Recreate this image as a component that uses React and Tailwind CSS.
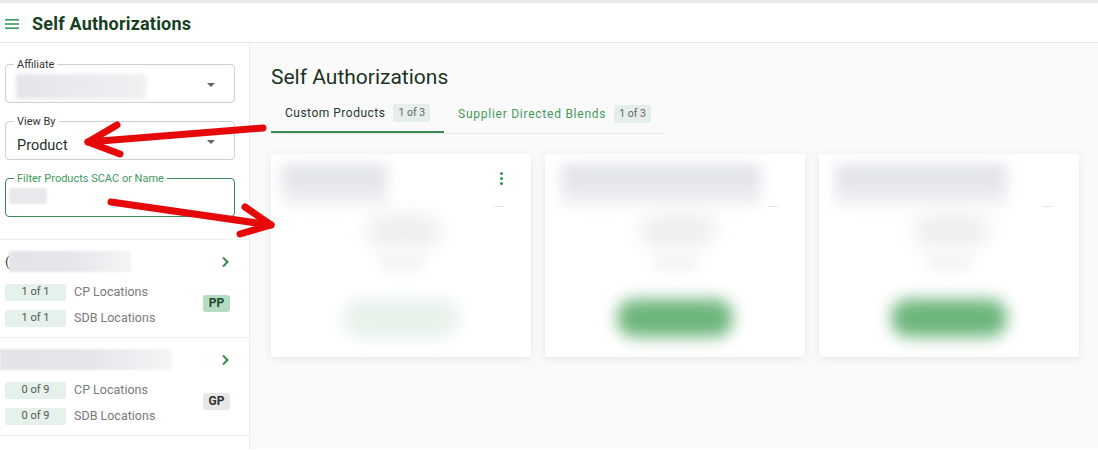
import React from "react";

const font = { fontFamily: "Roboto, 'Noto Sans', sans-serif" };

function Field({ label, active, children }) {
  return (
    <div
      className={`relative h-[39px] rounded-[4px] border ${
        active ? "border-[#3a8a55] border-[1.5px]" : "border-[#cfcfcf]"
      }`}
    >
      <span
        className={`absolute -top-[7px] left-[8px] bg-white px-[3px] text-[11px] leading-[13px] ${
          active ? "text-[#3f9a5c]" : "text-[#333]"
        }`}
      >
        {label}
      </span>
      {children}
    </div>
  );
}

function Caret() {
  return (
    <span className="absolute right-[19px] top-[18px] h-0 w-0 border-x-[4px] border-t-[4px] border-x-transparent border-t-[#666]" />
  );
}

function Chevron() {
  return (
    <svg width="10" height="12" viewBox="0 0 10 12" className="text-[#2f8a4c]">
      <path d="M3 1.5 L7.5 6 L3 10.5" fill="none" stroke="currentColor" strokeWidth="2" />
    </svg>
  );
}

function Item({ nameWidth, prefix, a, b, tag, tagClass }) {
  return (
    <div className="relative border-b border-[#eeeeee] h-[98px] pl-[5px] pr-[19px]">
      <div className="flex h-[43px] items-center justify-between">
        <div className="flex items-center">
          {prefix && <span className="text-[13px] text-[#333]">(</span>}
          <div
            className="h-[21px] bg-gradient-to-r from-[#e2e4e8] via-[#e4e6ea] to-[#f4f5f6] blur-[1px]"
            style={{ width: nameWidth, marginLeft: prefix ? 0 : -5 }}
          />
        </div>
        <Chevron />
      </div>
      <div className="flex items-center">
        <div className="flex flex-col gap-[7px]">
          {[a, b].map((row, i) => (
            <div key={i} className="flex items-center">
              <span className="flex h-[17px] w-[61px] items-center justify-center rounded-[2px] bg-[#e4f2eb] text-[11px] text-[#555]">
                {row[0]}
              </span>
              <span className="ml-[8px] text-[12.5px] text-[#7a7a7a]">{row[1]}</span>
            </div>
          ))}
        </div>
        <span
          className={`ml-auto mb-[4px] flex h-[17px] w-[27px] items-center justify-center rounded-[3px] text-[12px] font-bold ${tagClass}`}
        >
          {tag}
        </span>
      </div>
    </div>
  );
}

function Card({ first, topW, btn }) {
  return (
    <div className="relative h-[203px] w-[260px] overflow-hidden rounded-[2px] bg-white shadow-[0_2px_10px_rgba(0,0,0,0.08)]">
      <div
        className="absolute top-[11px] h-[40px] bg-gradient-to-b from-[#dcdfe6] to-[#f0f1f4] blur-[7px]"
        style={{ left: first ? 11 : 16, width: topW }}
      />
      {first && (
        <div className="absolute right-[28px] top-[18px] flex flex-col gap-[2px]">
          <span className="h-[3px] w-[3px] rounded-full bg-[#2e9a4f]" />
          <span className="h-[3px] w-[3px] rounded-full bg-[#2e9a4f]" />
          <span className="h-[3px] w-[3px] rounded-full bg-[#2e9a4f]" />
        </div>
      )}
      <div className="absolute right-[27px] top-[52px] h-px w-[10px] bg-[#e6e6e6]" />
      <div className="absolute left-[95px] top-[62px] h-[30px] w-[75px] rounded-full bg-[#ececec] blur-[10px]" />
      <div className="absolute left-[108px] top-[102px] h-[14px] w-[45px] rounded-full bg-[#f1f1f1] blur-[7px]" />
      <div
        className={`absolute left-[72px] top-[145px] h-[38px] w-[116px] rounded-[18px] blur-[8px] ${btn}`}
      />
    </div>
  );
}

export default function App() {
  return (
    <div className="relative h-[450px] w-full overflow-hidden bg-white" style={font}>
      <div className="h-[3px] bg-[#e9e9e9]" />
      <header className="flex h-[40px] items-center border-b border-[#e6e6e6] bg-white pl-[5px]">
        <svg width="14" height="12" viewBox="0 0 14 12" className="mt-[2px]">
          <rect x="0" y="1" width="14" height="1.6" fill="#3f9a5c" />
          <rect x="0" y="5.2" width="14" height="1.6" fill="#3f9a5c" />
          <rect x="0" y="9.4" width="14" height="1.6" fill="#3f9a5c" />
        </svg>
        <h1 className="ml-[13px] mt-[1px] text-[18px] font-bold tracking-[0.2px] text-[#173f24]">
          Self Authorizations
        </h1>
      </header>

      <div className="flex h-[406px]">
        <aside className="w-[250px] shrink-0 border-r border-[#ececec] bg-white">
          <div className="flex flex-col gap-[18px] pl-[5px] pr-[14px] pt-[21px]">
            <Field label="Affiliate">
              <div className="absolute left-[10px] top-[9px] h-[25px] w-[130px] bg-gradient-to-r from-[#e3e5e9] to-[#eef0f2] blur-[2px]" />
              <Caret />
            </Field>
            <Field label="View By">
              <span className="absolute left-[11px] top-[13px] text-[14.5px] text-[#1f3327]">Product</span>
              <Caret />
            </Field>
            <Field label="Filter Products SCAC or Name" active>
              <div className="absolute left-[3px] top-[9px] h-[16px] w-[38px] bg-[#e8e9ec] blur-[1px]" />
            </Field>
          </div>
          <div className="mt-[22px] border-t border-[#eeeeee]">
            <Item
              prefix
              nameWidth={122}
              a={["1 of 1", "CP Locations"]}
              b={["1 of 1", "SDB Locations"]}
              tag="PP"
              tagClass="bg-[#b4dcc3] text-[#1d4a2b]"
            />
            <Item
              nameWidth={172}
              a={["0 of 9", "CP Locations"]}
              b={["0 of 9", "SDB Locations"]}
              tag="GP"
              tagClass="bg-[#e7e7e7] text-[#333]"
            />
          </div>
        </aside>

        <main className="flex-1 bg-[#fafafa] pl-[21px] pr-[20px] pt-[21px]">
          <h2 className="text-[21px] leading-[26px] text-[#1b3324]">Self Authorizations</h2>
          <div className="mt-[10px] flex w-[393px] border-b border-[#e6e6e6]">
            <div className="flex h-[33px] w-[173px] items-center border-b-2 border-[#3a8a55] pl-[14px] pb-[5px]">
              <span className="text-[12px] tracking-[0.5px] text-[#24392c]">Custom Products</span>
              <span className="ml-[8px] rounded-[2px] bg-[#e3efe8] px-[5px] py-[1px] text-[10.5px] text-[#666]">1 of 3</span>
            </div>
            <div className="flex h-[33px] items-center pl-[14px] pb-[5px]">
              <span className="text-[12px] tracking-[0.75px] text-[#3f9a5c]">Supplier Directed Blends</span>
              <span className="ml-[8px] rounded-[2px] bg-[#e3efe8] px-[5px] py-[1px] text-[10.5px] text-[#666]">1 of 3</span>
            </div>
          </div>
          <div className="mt-[20px] flex gap-[14px]">
            <Card first topW={105} btn="bg-[#e6f2ea]" />
            <Card topW={200} btn="bg-[#6db57c]" />
            <Card topW={172} btn="bg-[#6db57c]" />
          </div>
        </main>
      </div>

      <svg
        className="pointer-events-none absolute inset-0"
        width="1098"
        height="450"
        viewBox="0 0 1098 450"
      >
        <g stroke="#e50909" strokeWidth="7" strokeLinecap="round" strokeLinejoin="round" fill="none">
          <path d="M263 128 L88 142" />
          <path d="M117 125 L88 142 L120 154" />
          <path d="M111 202 L271 225" />
          <path d="M245 207 L271 225 L240 234" />
        </g>
      </svg>
    </div>
  );
}
